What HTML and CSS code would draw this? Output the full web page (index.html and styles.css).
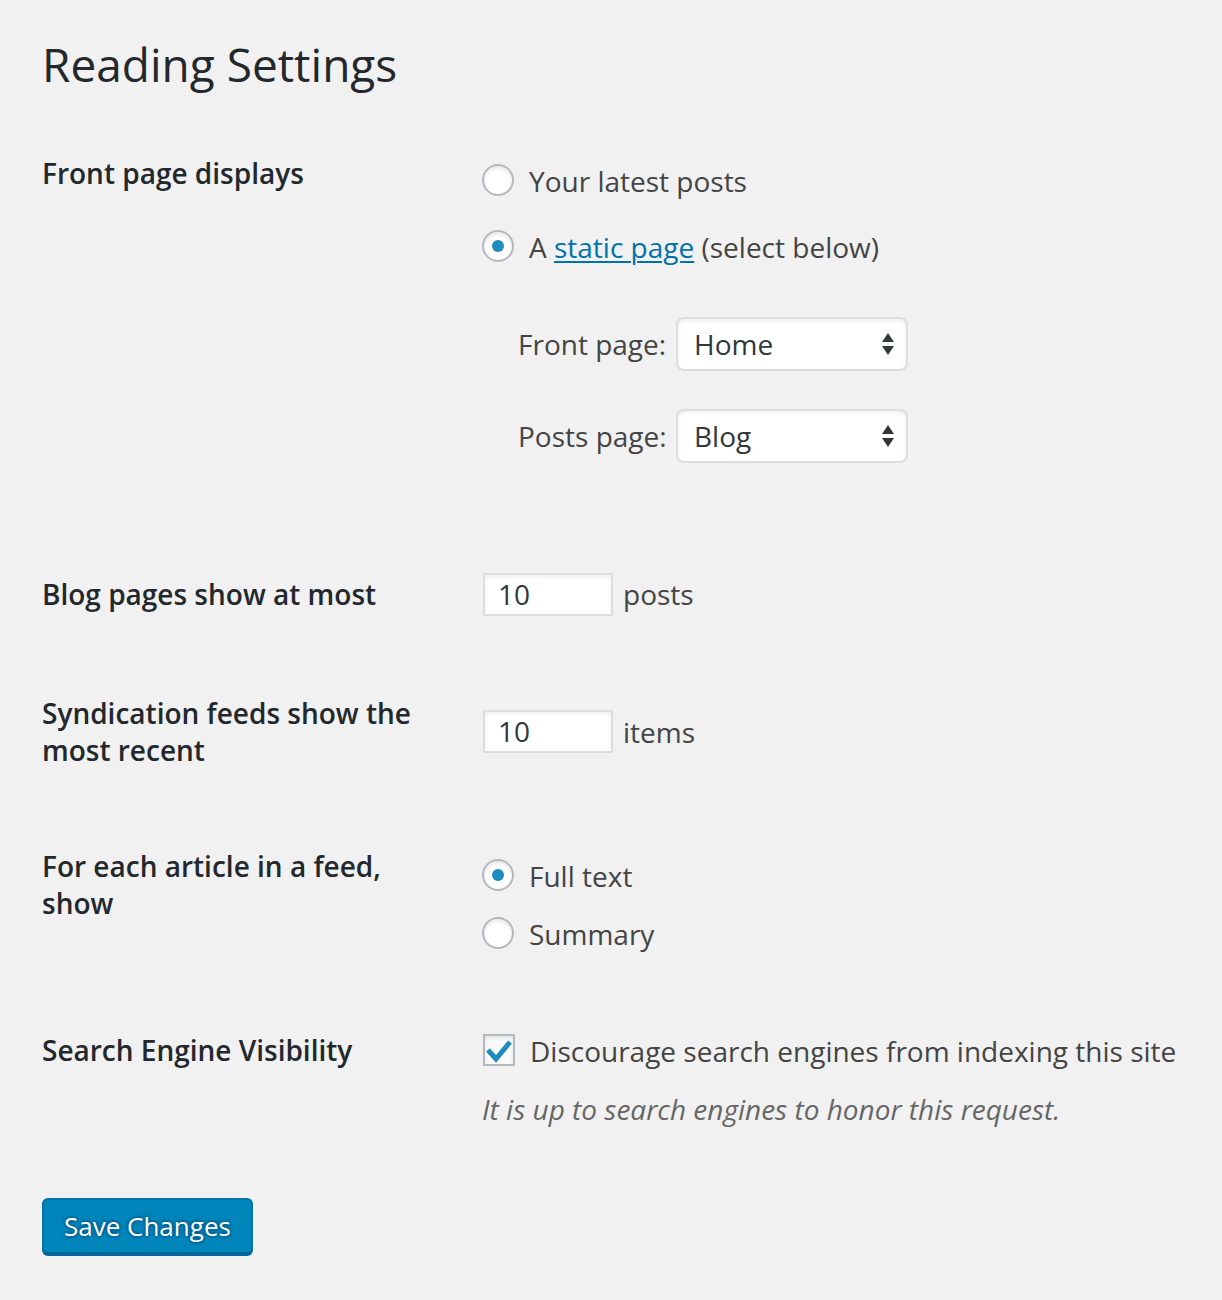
FILE: index.html
```html
<!DOCTYPE html>
<html lang="en">
<head>
<meta charset="utf-8">
<title>Reading Settings</title>
<link rel="stylesheet" href="styles.css">
</head>
<body>
<div class="wrap">
  <h1 class="title">Reading Settings</h1>

  <div class="form">
    <div class="row row-front">
      <div class="th">Front page displays</div>
      <div class="td td-front">
        <div class="opt"><span class="radio"></span><span>Your latest posts</span></div>
        <div class="opt opt-second"><span class="radio checked"></span><span>A <a class="link" href="#">static page</a> (select below)</span></div>
        <div class="sel-row sel-row-first">
          <span class="sel-label">Front page:</span>
          <div class="select"><span class="sel-value">Home</span>
            <svg class="sel-arrows" width="12" height="22" viewBox="0 0 12 22"><polygon points="6,0 12,9 0,9" fill="#32373c"/><polygon points="0,13 12,13 6,22" fill="#32373c"/></svg>
          </div>
        </div>
        <div class="sel-row sel-row-second">
          <span class="sel-label">Posts page:</span>
          <div class="select"><span class="sel-value">Blog</span>
            <svg class="sel-arrows" width="12" height="22" viewBox="0 0 12 22"><polygon points="6,0 12,9 0,9" fill="#32373c"/><polygon points="0,13 12,13 6,22" fill="#32373c"/></svg>
          </div>
        </div>
      </div>
    </div>

    <div class="row row-blog">
      <div class="th">Blog pages show at most</div>
      <div class="td td-inline">
        <div class="num-input">10</div><span>posts</span>
      </div>
    </div>

    <div class="row row-feeds">
      <div class="th">Syndication feeds show the most recent</div>
      <div class="td td-inline">
        <div class="num-input">10</div><span>items</span>
      </div>
    </div>

    <div class="row row-article">
      <div class="th th-narrow">For each article in a feed, show</div>
      <div class="td td-article">
        <div class="opt"><span class="radio checked"></span><span>Full text</span></div>
        <div class="opt opt-summary"><span class="radio"></span><span>Summary</span></div>
      </div>
    </div>

    <div class="row row-search">
      <div class="th">Search Engine Visibility</div>
      <div class="td td-search">
        <div class="opt"><span class="checkbox"><svg width="28" height="28" viewBox="0 0 28 28"><polyline points="3,14 11,23 25,6" fill="none" stroke="#1e8cbe" stroke-width="5" stroke-linejoin="miter"/></svg></span><span>Discourage search engines from indexing this site</span></div>
        <p class="desc">It is up to search engines to honor this request.</p>
      </div>
    </div>
  </div>

  <div class="submit">
    <button class="button-primary" type="button">Save Changes</button>
  </div>
</div>
</body>
</html>
```

FILE: styles.css
```css
html, body {
  margin: 0;
  padding: 0;
  background: #f1f1f1;
}

body {
  font-family: "Open Sans", "Noto Sans", sans-serif;
  color: #444;
  font-size: 28px;
}

.wrap {
  padding: 34px 42px 40px 42px;
}

.title {
  margin: 0;
  font-size: 46px;
  line-height: 60px;
  font-weight: 400;
  color: #23282d;
}

.form {
  margin-top: 21px;
}

.row {
  display: grid;
  grid-template-columns: 440px 1fr;
  align-items: center;
}

.th {
  align-self: start;
  padding: 40px 0;
  font-weight: 600;
  font-size: 28px;
  line-height: 36.4px;
  color: #23282d;
  width: 400px;
}

.th-narrow {
  width: 370px;
}

.td {
  font-size: 28px;
  line-height: 40px;
  color: #444;
}

.opt {
  display: flex;
  align-items: center;
  height: 40px;
  white-space: nowrap;
}

.radio {
  box-sizing: border-box;
  width: 32px;
  height: 32px;
  border: 2px solid #b4b9be;
  border-radius: 50%;
  background: #fff;
  box-shadow: inset 0 2px 4px rgba(0, 0, 0, 0.1);
  margin-right: 15px;
  margin-top: -2px;
  display: flex;
  align-items: center;
  justify-content: center;
  flex: none;
}

.radio.checked::before {
  content: "";
  width: 12px;
  height: 12px;
  border-radius: 50%;
  background: #1e8cbe;
}

.checkbox {
  box-sizing: border-box;
  width: 32px;
  height: 32px;
  border: 2px solid #b4b9be;
  background: #fbfbfb;
  box-shadow: inset 0 2px 4px rgba(0, 0, 0, 0.1);
  margin-right: 15px;
  margin-top: -2px;
  display: flex;
  align-items: center;
  justify-content: center;
  flex: none;
}

.link {
  color: #0073aa;
  text-decoration: underline;
  text-underline-offset: 3px;
  text-decoration-thickness: 2px;
}

/* Front page row */
.td-front {
  align-self: start;
  padding: 46px 0 73px 0;
}

.opt-second {
  margin-top: 26px;
}

.sel-row {
  display: flex;
  align-items: center;
  gap: 10px;
  padding-left: 36px;
  height: 54px;
}

.sel-row-first {
  margin-top: 50px;
}

.sel-row-second {
  margin-top: 38px;
}

.sel-label {
  width: 148px;
  color: #444;
  white-space: nowrap;
}

.select {
  box-sizing: border-box;
  width: 232px;
  height: 54px;
  border: 2px solid #ddd;
  border-radius: 8px;
  background: #fff;
  box-shadow: inset 0 2px 4px rgba(0, 0, 0, 0.07);
  display: flex;
  align-items: center;
  justify-content: space-between;
  padding: 0 12px 0 16px;
  color: #32373c;
}

.sel-arrows {
  display: block;
}

/* number rows */
.row-blog {
  margin-bottom: 3px;
}

.td-inline {
  display: flex;
  align-items: center;
  gap: 10px;
  padding: 30px 0;
}

.num-input {
  box-sizing: border-box;
  width: 130px;
  height: 43px;
  margin-left: 1px;
  border: 2px solid #ddd;
  background: #fff;
  box-shadow: inset 0 2px 4px rgba(0, 0, 0, 0.07);
  padding: 0 13px;
  line-height: 39px;
  color: #32373c;
}

/* article row */
.td-article {
  align-self: start;
  padding: 48px 0 38px 0;
}

.opt-summary {
  margin-top: 18px;
}

/* search row */
.td-search {
  align-self: start;
  padding: 39px 0 0 0;
}

.td-search .opt {
  margin-left: 1px;
}

.desc {
  margin: 18px 0 0 0;
  font-style: italic;
  color: #666;
  line-height: 40px;
}

/* submit */
.submit {
  padding-top: 69px;
}

.button-primary {
  box-sizing: border-box;
  height: 56px;
  padding: 0 20px;
  font-family: "Open Sans", "Noto Sans", sans-serif;
  font-size: 26px;
  line-height: 50px;
  color: #fff;
  background: #0085ba;
  border: 2px solid #0073aa;
  border-bottom-color: #006799;
  border-radius: 6px;
  box-shadow: 0 2px 0 #006799;
  text-shadow: 0 -2px 2px #006799, 2px 0 2px #006799, 0 2px 2px #006799, -2px 0 2px #006799;
  cursor: pointer;
}
```
